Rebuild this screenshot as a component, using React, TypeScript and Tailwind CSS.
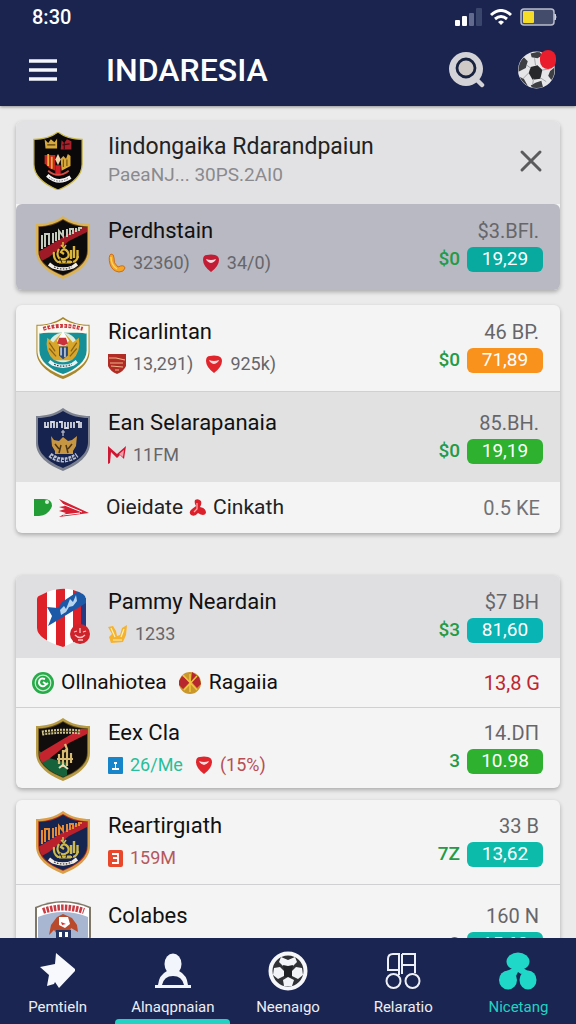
import React from "react";

type IconProps = { className?: string };

const SHIELD = "M28 0 C36 6 46 8 55 8 V35 C55 48 43 57 28 63 C13 57 1 48 1 35 V8 C10 8 20 6 28 0 Z";
const INNER = "M28 4 C36 9 44 11 52 11 V35 C52 46 41 54 28 59 C15 54 4 46 4 35 V11 C12 11 20 9 28 4 Z";

function Emblem({ fill }: { fill: string }) {
  return (
    <g fill="none" stroke={fill}>
      <path d="M24 33 Q21 38 24 42 Q29 45 33 41 Q35 37 31 34 Q28 32 26 36 L29 38" strokeWidth="2.2" />
      <path d="M26 29 L29 32 L31 29 M28 26 V30" strokeWidth="1.6" />
      <path d="M36 34 V43 M39 30 V42 M42.500 34 V42" strokeWidth="2.4" />
      <path d="M19 36 Q18 43 23 46 H38 Q42 45 43 40" strokeWidth="2.2" />
      <path d="M24 46 H36" strokeWidth="3" />
      <path d="M25 42 L27 47 M32 43 L31 47 M37 44 L38 47" stroke="#2a2112" strokeWidth="1" />
    </g>
  );
}

function Ribbon({ y = 50, color = "#f3eee8" }: { y?: number; color?: string }) {
  return (
    <g fill="none">
      <path d={`M14 ${y - 2} L18 ${y + 1} Q28 ${y + 5} 38 ${y + 1} L42 ${y - 2}`} stroke={color} strokeWidth="3.500" />
      <path d={`M19 ${y + 1} Q28 ${y + 5} 37 ${y + 1}`} stroke="#333" strokeWidth="1.2" strokeDasharray="1.6 1.4" />
    </g>
  );
}

function CrestRoyal() {
  return (
    <svg viewBox="0 0 56 63" className="h-[58px] w-[50px]" preserveAspectRatio="none" aria-hidden="true">
      <path d={SHIELD} fill="#0b0809" stroke="#c9b84a" strokeWidth="1.4" />
      <path d="M13 8 L17 12 L20 8 L24 11 L27 7 V18 H14 Z" fill="#d7a93a" />
      <path d="M16 14 H25" stroke="#5a3d0e" strokeWidth="1.5" />
      <path d="M32 9 L35 12 L38 8 L43 10 V19 H31 Z" fill="#a8222c" />
      <path d="M33 14 L41 13 M35 11 V19" stroke="#43080d" strokeWidth="1.3" />
      <path d="M13 25 H25 V42 L18 39 L13 34 Z" fill="#c6281f" />
      <path d="M17 24 V37 M21 27 V40" stroke="#efb03b" strokeWidth="2" />
      <path d="M31 29 L34 26 L37 29 L39 24 L42 26 V37 L32 42 Z" fill="#d7a93a" />
      <path d="M34 30 V38 M38 30 V37" stroke="#6d4b0c" strokeWidth="1.2" />
      <path d="M28 24 L31 30 L28 36 L25 30 Z" fill="#f3d7b0" />
      <path d="M25 36 H31 V47 H25 Z" fill="#d01f26" />
      <path d="M17 42 Q28 51 40 42" stroke="#d84a42" strokeWidth="2" fill="none" />
      <path d="M16 47 Q28 58 42 49" stroke="#f4f4f4" strokeWidth="4" fill="none" />
      <path d="M18 49 Q28 57 40 50" stroke="#555" strokeWidth="1" strokeDasharray="1.5 1.5" fill="none" />
    </svg>
  );
}

type CrestColors = { rim: string; edge: string; base: string; sash: string; marks: string; bird: string; corner?: string };

function CrestSash({ c, id }: { c: CrestColors; id: string }) {
  return (
    <svg viewBox="0 0 56 63" className="h-[63px] w-14" aria-hidden="true">
      <clipPath id={id}><path d={INNER} /></clipPath>
      <path d={SHIELD} fill={c.rim} />
      <path d={INNER} stroke={c.edge} strokeWidth="1.5" fill="none" />
      <g clipPath={`url(#${id})`}>
        <rect width="56" height="63" fill={c.base} />
        {c.corner && <path d="M0 30 L14 40 L32 45 V63 H0 Z" fill={c.corner} />}
        <path d="M0 38 L40 14 L56 6 V14 L34 25 L14 41 L3 47 Z" fill={c.sash} />
      </g>
      {c.corner ? (
        <g stroke={c.marks} fill="none">
          <path d="M7 15 Q28 12 46 14" strokeWidth="5" strokeDasharray="2 1" />
          <path d="M8 15 Q28 12 45 14" strokeWidth="1" stroke="#3e3515" />
          <path d="M30 26 L32 31 L29 34 M24 36 V46 M28 32 V49 M32 31 V48 M36 35 V45 M22 41 H38" strokeWidth="2.2" stroke={c.bird} />
          <path d="M24 50 L28 47 L33 51" strokeWidth="2" stroke="#e5dab9" />
        </g>
      ) : (
        <>
          <path d="M7 33 V19 M10 31 V18 H14 V29 M18 17 V27 M21 25 V16 M24 24 V15 L28 20 V14 M32 21 V13 M35 19 V13 H38 V18 M41 16 V12 M44 15 V12 H47" stroke={c.marks} strokeWidth="2" fill="none" />
          <Emblem fill={c.bird} />
          <Ribbon y={50} />
        </>
      )}
    </svg>
  );
}

function CrestTeal() {
  return (
    <svg viewBox="0 0 56 63" className="h-[62px] w-14" aria-hidden="true">
      <path d={SHIELD} fill="#a7882f" />
      <path d="M28 2 C36 7 45 9 54 9 V34 C54 46 43 54 28 60 C13 54 2 46 2 34 V9 C11 9 20 7 28 2 Z" fill="#fdf8e6" />
      <path d="M4 16 H52 V34 C52 45 41 53 28 58 C15 53 4 45 4 34 Z" fill="#168f97" />
      <path d="M4 17 V10 Q28 2 52 10 V17 Q28 11 4 17 Z" fill="#fdf8f2" />
      <path d="M8 12 Q28 6 48 12" stroke="#c9383c" strokeWidth="4" strokeDasharray="3 1.3" fill="none" />
      <path d="M9 12 Q28 6 47 12" stroke="#fff" strokeWidth="1" strokeDasharray="2 3" fill="none" />
      <circle cx="28" cy="31" r="15" fill="#d9ecdf" />
      <path d="M12 21 L18 26 L22 21 L28 15 L34 21 L38 26 L44 21 Q47 35 37 44 H19 Q9 35 12 21 Z" fill="#d9a62c" />
      <path d="M14 26 L20 35 M14 32 L21 40 M42 26 L36 35 M42 32 L35 40" stroke="#8a6518" strokeWidth="1.3" />
      <path d="M28 14 L34 24 L31 29 H24 L22 24 Z" fill="#fff" />
      <path d="M24 21 H31 L33 27 L29 29 L22 27 Z" fill="#c9323a" />
      <path d="M24 30 H33 V39 L28 43 L24 39 Z" fill="#2b4a7c" />
      <path d="M26 31 V39 M30 31 V41" stroke="#fff" strokeWidth="1.2" />
      <Ribbon y={47} color="#e5f1f3" />
    </svg>
  );
}

function CrestNavy() {
  return (
    <svg viewBox="0 0 56 63" className="h-[63px] w-14" aria-hidden="true">
      <path d={SHIELD} fill="#7c8290" />
      <path d="M28 3 C36 8 45 10 53 10 V34 C53 46 42 54 28 60 C14 54 3 46 3 34 V10 C11 10 20 8 28 3 Z" fill="#17234f" />
      <path d="M10 14 V19 H13 V14 M16 20 V14 H19 V20 M22 14 V20 M24 14 H27 V20 M30 14 V20 H33 V14 M36 14 V20 M39 14 V20 M41 14 H44 V20 M46 14 V20" stroke="#d5d8df" strokeWidth="1.8" fill="none" />
      <path d="M28 22 V28 M26 24 H30" stroke="#c4c8d4" strokeWidth="1.2" />
      <path d="M16 28 L19 32 L24 33 L28 29 L33 33 L37 32 L42 28 L41 38 L38 43 V46 H20 V43 L17 38 Z" fill="#c79643" />
      <path d="M20 36 L24 41 M37 36 L33 41 M26 37 L24 45 M31 37 L33 45" stroke="#4c3414" strokeWidth="1.5" />
      <path d="M15 47 Q28 57 42 47" stroke="#b9bfcb" strokeWidth="5" strokeDasharray="3 1" fill="none" />
      <path d="M16 48 Q28 57 41 48" stroke="#17234f" strokeWidth="1.2" strokeDasharray="2 2" fill="none" />
    </svg>
  );
}

function CrestStripes() {
  return (
    <svg viewBox="0 0 56 60" className="h-[60px] w-14" aria-hidden="true">
      <clipPath id="stripes"><path d="M2 11 Q2 8 6 7 Q28 -5 48 6 Q51 8 51 11 V38 Q51 50 28 59 Q2 51 2 40 Z" /></clipPath>
      <g clipPath="url(#stripes)">
        <rect width="56" height="60" fill="#fff" />
        <path d="M0 0 H12 V60 H0 Z M21 0 H30 V60 H21 Z M38 0 H46 V60 H38 Z" fill="#de2029" />
        <path d="M46 10 H56 V60 H46 Z" fill="#243b83" />
        <path d="M27 14 L45 2 L56 5 V12 L28 29 L13 38 L17 28 L12 19 L23 20 Z" fill="#1c5aa8" />
        <path d="M25 22 L29 18 L31 21 L35 11 L38 14 L41 7 L42 13 L38 18 L34 19 L31 24 L26 27 Z" fill="#b8d5ee" />
      </g>
      <circle cx="45" cy="46" r="10" fill="#cf232c" />
      <path d="M39 44 L42 43 M45 40 V45 M48 44 L51 43 M40 47 Q45 52 50 47 M43 52 H48" stroke="#f7c5c2" strokeWidth="1.3" fill="none" />
    </svg>
  );
}

function CrestEagle() {
  return (
    <svg viewBox="0 0 56 63" className="h-[63px] w-14" aria-hidden="true">
      <path d="M0 6 Q28 -6 56 6 V36 Q52 52 28 62 Q4 52 0 36 Z" fill="#7e7767" />
      <path d="M2 7 Q28 -4 54 7 V36 Q50 51 28 60 Q6 51 2 36 Z" fill="#fff" />
      <path d="M3 16 Q28 6 53 16 V36 Q49 50 28 59 Q7 50 3 36 Z" fill="#a9b6d1" />
      <path d="M8 10 Q28 3 49 10" stroke="#cb3b42" strokeWidth="6" strokeDasharray="2.5 1.2" fill="none" />
      <path d="M14 34 L16 24 L22 16 L28 13 L37 17 L42 24 L43 31 L36 27 L34 33 H22 L19 29 Z" fill="#b94a2b" />
      <path d="M24 16 H33 L35 23 L30 27 L24 24 Z" fill="#fff" />
      <path d="M26 21 L31 23 L27 24 Z" fill="#d92f2f" />
      <path d="M21 29 H36 V45 H21 Z" fill="#263461" />
      <path d="M24 31 H27 V36 H24 Z M30 31 H33 V36 H30 Z" fill="#fff" />
    </svg>
  );
}

function Ball({ className }: IconProps) {
  return (
    <svg viewBox="0 0 40 40" className={className} aria-hidden="true">
      <clipPath id="ballClip"><circle cx="20" cy="20" r="18.5" /></clipPath>
      <circle cx="20" cy="20" r="19" fill="#e6e6e8" />
      <g clipPath="url(#ballClip)">
        <path d="M14 17 L21 15 L26 20 L24 29 L16 30 L12 23 Z" fill="#262829" />
        <path d="M14 3 L23 1 L26 5 L21 8 L15 7 Z M0 14 L7 7 L11 11 L9 18 L1 22 Z M0 26 L7 29 L12 38 L4 36 Z M19 33 L25 31 L27 39 L17 40 L14 36 Z M34 21 L40 16 V29 L35 30 L32 26 Z" fill="#3d3f42" />
        <path d="M18 8 L19 15 M10 15 L14 18 M12 23 L6 29 M17 29 L16 35 M24 28 L30 32 M26 20 L33 19" stroke="#a3a5a8" strokeWidth="1" />
      </g>
    </svg>
  );
}

function NavBall() {
  return (
    <svg viewBox="0 0 40 40" className="size-10" aria-hidden="true">
      <clipPath id="navBallClip"><circle cx="20" cy="20" r="15.5" /></clipPath>
      <circle cx="20" cy="20" r="17.5" fill="#303236" stroke="#f6f7fb" strokeWidth="4" />
      <g clipPath="url(#navBallClip)" fill="#f3f4f7">
        <path d="M13 6 L20 9 L27 6 L29 11 L25 15 H15 L11 11 Z" />
        <path d="M6 17 L12 16 L16 20 V25 L10 28 L5 24 Z" />
        <path d="M34 17 L28 16 L24 20 V25 L30 28 L35 24 Z" />
        <path d="M15 29 L20 26 L26 29 L24 35 H16 Z" />
      </g>
      <path d="M15 14 L20 15 L25 14 L24 19 V26 H16 V19 Z" fill="#202226" />
    </svg>
  );
}

const PhoneIcon = () => (
  <svg viewBox="0 0 18 20" className="h-5 w-[18px]" aria-hidden="true">
    <path d="M3 1 Q6 1 6 5 Q5 10 10 14 Q16 11 17 15 Q16 19 11 19 Q4 18 2 11 Q0 3 3 1 Z" fill="#f6a623" stroke="#c96d22" strokeWidth="1" />
    <path d="M3 4 Q3 12 9 16" stroke="#ffd565" strokeWidth="1.4" fill="none" />
  </svg>
);

const HeartIcon = ({ color = "#e0262c" }: { color?: string }) => (
  <svg viewBox="0 0 18 18" className="size-[18px]" aria-hidden="true">
    <path d="M9 18 Q1 12 1 6 Q1 1 5 1 Q9 0 13 1 Q17 2 17 6 Q17 12 9 18 Z" fill={color} />
    <path d="M4 5 Q9 7 14 5 Q13 8 9 9 Q5 8 4 5 Z" fill="#fbd9dc" />
  </svg>
);

const BadgeIcon = () => (
  <svg viewBox="0 0 18 20" className="h-5 w-[18px]" aria-hidden="true">
    <path d="M0 0 H18 V12 Q16 17 9 20 Q2 17 0 12 Z" fill="#b02c24" />
    <path d="M1 4 H8 L17 6 M2 9 L15 9 M3 12 L15 13 M7 16 H11" stroke="#f0b48a" strokeWidth="1.2" fill="none" />
  </svg>
);

const MIcon = () => (
  <svg viewBox="0 0 18 18" className="size-[18px]" aria-hidden="true">
    <path d="M0 18 V0 L9 8 L18 0 L16 13 L12 9 L9 12 L3 6 L2 17 Z" fill="#cf1633" />
    <path d="M11 8 L16 4 L15 11 Z" fill="#f2a0a8" />
  </svg>
);

const CrownIcon = () => (
  <svg viewBox="0 0 20 18" className="h-[18px] w-5" aria-hidden="true">
    <path d="M0 2 L5 1 L8 6 L9 11 L12 10 L14 3 L19 0 L18 10 L15 17 L3 18 L1 12 L4 9 Z" fill="#f5b22f" />
    <path d="M3 3 L7 12 M16 4 L13 12 M5 15 H14" stroke="#fff0b8" strokeWidth="1.2" />
  </svg>
);

const BlueIcon = () => (
  <svg viewBox="0 0 15 17" className="h-[17px] w-[15px]" aria-hidden="true">
    <rect width="15" height="17" rx="1" fill="#1685c9" />
    <path d="M4 11 H11 V13 H4 Z M7 5 H8 V11 H7 Z M6 5 H9 V7 H6 Z" fill="#fff" />
  </svg>
);

const RedBoxIcon = () => (
  <svg viewBox="0 0 15 17" className="h-[17px] w-[15px]" aria-hidden="true">
    <rect width="15" height="17" rx="2" fill="#e8472b" />
    <path d="M4 4 H10 V13 H4 M5 8 H10" stroke="#fff" strokeWidth="1.8" fill="none" />
  </svg>
);

const Close = () => (
  <svg viewBox="0 0 24 24" className="size-6" aria-hidden="true">
    <path d="M3 3 L21 21 M21 3 L3 21" stroke="#5b5b5d" strokeWidth="3" strokeLinecap="round" />
  </svg>
);

type Meta = { icon: React.ReactNode; text: string; tone?: string };

function TeamRow(props: {
  crest: React.ReactNode;
  name: string;
  meta: Meta[];
  value: string;
  change: string;
  pill: string;
  pillTone: string;
  className?: string;
}) {
  return (
    <li className={`flex items-center pr-[17px] pl-[18px] ${props.className ?? ""}`}>
      <div className="flex w-[58px] shrink-0 justify-center">{props.crest}</div>
      <div className="ml-4 min-w-0 flex-1">
        <h3 className="truncate text-[22px] leading-8 text-[#111]">{props.name}</h3>
        <div className="flex h-8 items-center gap-3">
          {props.meta.map((m) => (
            <span key={m.text} className={`flex items-center gap-[7px] text-lg ${m.tone ?? "text-[#66666a]"}`}>
              {m.icon}
              {m.text}
            </span>
          ))}
        </div>
      </div>
      <div className="flex h-16 flex-col items-end">
        <span className="pr-1 text-xl leading-8 text-[#66666a]">{props.value}</span>
        <span className="flex h-6 items-center gap-[7px]">
          <span className="text-[19px] font-medium text-[#239b46]">{props.change}</span>
          <span className={`flex h-[25px] w-[76px] items-center justify-center rounded-md text-[19px] text-white ${props.pillTone}`}>
            {props.pill}
          </span>
        </span>
      </div>
    </li>
  );
}

const card = "overflow-hidden rounded-md bg-[#f4f4f4] shadow-[0_2px_4px_rgba(0,0,0,0.28)]";

function NavItem({ icon, label, active, tone }: { icon: React.ReactNode; label: string; active?: boolean; tone?: string }) {
  return (
    <a href="#" className={`relative flex flex-1 flex-col items-center pt-[13px] ${tone ?? "text-[#eceef6]"}`} aria-current={active ? "page" : undefined}>
      <span className="flex h-10 items-center">{icon}</span>
      <span className="mt-1 text-[15px] leading-6">{label}</span>
      {active && <span className="absolute inset-x-0 bottom-0 h-[5px] rounded-t-sm bg-[#20d3c2]" />}
    </a>
  );
}

export default function App() {
  return (
    <div className="flex h-screen flex-col bg-[#ebebec] font-[Roboto,sans-serif]">
      <header className="shrink-0 bg-[#1a244e] text-white shadow-[0_1px_3px_rgba(0,0,0,0.4)]">
        <div className="flex h-[34px] items-center justify-between pr-[19px] pl-8">
          <span className="text-xl font-medium">8:30</span>
          <div className="flex items-center gap-2">
            <svg viewBox="0 0 27 18" className="h-[18px] w-[27px]" aria-hidden="true">
              <rect x="0" y="12" width="5" height="6" rx="1" fill="#fff" />
              <rect x="7" y="8" width="5" height="10" rx="1" fill="#fff" />
              <rect x="14" y="5" width="5" height="13" rx="1" fill="#626b8d" />
              <rect x="21" y="0" width="6" height="18" rx="1" fill="#3b466d" />
            </svg>
            <svg viewBox="0 0 22 17" className="h-[17px] w-[22px]" fill="none" stroke="#fff" strokeWidth="3" aria-hidden="true">
              <path d="M1 6 Q11 -3 21 6" />
              <path d="M5 10 Q11 5 17 10" />
              <path d="M8 13 Q11 10 14 13 L11 16 Z" fill="#fff" stroke="none" />
            </svg>
            <svg viewBox="0 0 37 18" className="h-[18px] w-[37px]" aria-hidden="true">
              <rect x="1" y="1" width="33" height="16" rx="3" fill="#444c6b" stroke="#b9bdcb" strokeWidth="1.5" />
              <rect x="3" y="3" width="11" height="12" rx="1" fill="#f5dd27" />
              <path d="M35 6 Q37 9 35 12 Z" fill="#d4d7e2" stroke="#d4d7e2" />
            </svg>
          </div>
        </div>
        <div className="flex h-[72px] items-center pr-5 pl-[29px]">
          <button type="button" aria-label="Menu">
            <svg viewBox="0 0 28 24" className="h-6 w-7" aria-hidden="true">
              <path d="M0 3 H28 M0 12 H28 M0 21 H28" stroke="#f4f7fc" strokeWidth="3.4" />
            </svg>
          </button>
          <h1 className="ml-[49px] flex-1 text-[32px] leading-9 font-medium">INDARESIA</h1>
          <button type="button" aria-label="Search" className="mr-8">
            <svg viewBox="0 0 36 36" className="size-9" aria-hidden="true">
              <circle cx="17" cy="17" r="17" fill="#d3d2d7" />
              <path d="M25 25 L33 33" stroke="#d3d2d7" strokeWidth="4.5" strokeLinecap="round" />
              <circle cx="17" cy="16" r="9" fill="#cfc9c8" stroke="#17223f" strokeWidth="2.8" />
            </svg>
          </button>
          <button type="button" aria-label="Live match" className="relative">
            <Ball className="h-10 w-[39px]" />
            <span className="absolute top-0 right-0 h-[19px] w-4 rounded-full bg-[#e91d2b]" />
          </button>
        </div>
      </header>

      <main className="min-h-0 flex-1 overflow-hidden px-4 pt-[15px]">
        <section className={card}>
          <div className="flex h-[83px] items-center bg-[#e2e2e4] px-[17px] pb-1">
            <CrestRoyal />
            <div className="ml-[25px] min-w-0 flex-1">
              <h2 className="truncate text-[23px] leading-7 text-[#222]">Iindongaika Rdarandpaiun</h2>
              <p className="truncate text-[19px] leading-7 text-[#8a8a8e]">PaeaNJ... 30PS.2AI0</p>
            </div>
            <button type="button" aria-label="Close"><Close /></button>
          </div>
          <ul>
            <TeamRow
              className="rounded-t-md bg-[#b8b9c2] py-[11px]"
              crest={<CrestSash id="c1" c={{ rim: "#dcb456", edge: "#6d4a1c", base: "#0e0b0c", sash: "#9d1a26", marks: "#c3cbbd", bird: "#dcb437" }} />}
              name="Perdhstain"
              meta={[{ icon: <PhoneIcon />, text: "32360)" }, { icon: <HeartIcon color="#c31c35" />, text: "34/0)" }]}
              value="$3.BFl."
              change="$0"
              pill="19,29"
              pillTone="bg-[#08aaa0]"
            />
          </ul>
        </section>

        <section className={`${card} mt-[15px]`}>
          <ul>
            <TeamRow
              className="py-[11px]"
              crest={<CrestTeal />}
              name="Ricarlintan"
              meta={[{ icon: <BadgeIcon />, text: "13,291)" }, { icon: <HeartIcon />, text: "925k)" }]}
              value="46 BP."
              change="$0"
              pill="71,89"
              pillTone="bg-[#f9911d]"
            />
            <TeamRow
              className="border-t border-[#d0d0d2] bg-[#e1e1e2] pt-[15px] pb-[11px]"
              crest={<CrestNavy />}
              name="Ean Selarapanaia"
              meta={[{ icon: <MIcon />, text: "11FM" }]}
              value="85.BH."
              change="$0"
              pill="19,19"
              pillTone="bg-[#2db12e]"
            />
            <li className="flex h-[51px] items-center pr-5 pl-[18px] text-[21px] text-[#222]">
              <svg viewBox="0 0 56 20" className="h-5 w-14" aria-hidden="true">
                <path d="M0 1 H10 Q18 1 18 8 Q15 17 5 18 H0 Z" fill="#229d35" />
                <circle cx="13" cy="4" r="2" fill="#d3efd6" />
                <path d="M25 1 L55 15 L25 19 L32 15 L25 13 L31 11 L25 9 L31 8 Z" fill="#d51f32" />
                <path d="M28 6 L48 14 M29 17 L46 15" stroke="#fff" strokeWidth="1" />
              </svg>
              <span className="ml-4">Oieidate</span>
              <svg viewBox="0 0 18 18" className="mx-[6px] size-[18px]" aria-hidden="true">
                <path d="M6 1 Q9 -1 12 2 Q13 5 11 8 Q17 9 17 14 Q15 18 9 14 Q6 18 2 16 Q-1 13 3 10 L7 7 Q5 4 6 1 Z" fill="#dc202b" />
                <path d="M8 4 V10 L5 13" stroke="#ffb0ae" strokeWidth="1.2" fill="none" />
              </svg>
              <span>Cinkath</span>
              <span className="ml-auto text-xl text-[#727276]">0.5 KE</span>
            </li>
          </ul>
        </section>

        <section className={`${card} mt-[42px]`}>
          <ul>
            <TeamRow
              className="bg-[#dfdfe1] pt-[11px] pb-2"
              crest={<CrestStripes />}
              name="Pammy Neardain"
              meta={[{ icon: <CrownIcon />, text: "1233" }]}
              value="$7 BH"
              change="$3"
              pill="81,60"
              pillTone="bg-[#08b4b4]"
            />
            <li className="flex h-[49px] items-center pr-5 pl-4 text-[21px] text-[#111]">
              <svg viewBox="0 0 22 22" className="size-[22px]" aria-hidden="true">
                <circle cx="11" cy="11" r="11" fill="#26ab48" />
                <circle cx="11" cy="11" r="7.8" fill="none" stroke="#c6efcf" strokeWidth="1.2" />
                <path d="M13 7 Q7 5 7 11 Q8 15 12 14 L16 11 M11 10 L14 12" stroke="#fff" strokeWidth="2" fill="none" />
              </svg>
              <span className="ml-[7px]">Ollnahiotea</span>
              <svg viewBox="0 0 22 22" className="mr-2 ml-3 size-[22px]" aria-hidden="true">
                <circle cx="11" cy="11" r="11" fill="#c9972c" />
                <path d="M0 9 L3 4 L11 10 L4 17 L0 13 Z M12 9 L13 0 L20 5 L22 12 L18 16 Z" fill="#b8262e" />
                <path d="M4 3 L18 18 M18 4 L5 18 M11 2 V20" stroke="#f0c63e" strokeWidth="1.5" />
              </svg>
              <span>Ragaiia</span>
              <span className="ml-auto text-xl text-[#bd2630]">13,8 G</span>
            </li>
            <TeamRow
              className="border-t border-[#d0d0d2] pt-[9px] pb-[7px]"
              crest={<CrestSash id="c2" c={{ rim: "#b89b45", edge: "#5d4a1c", base: "#100d0c", sash: "#c4242d", marks: "#cfc48e", bird: "#d8bb72", corner: "#17623a" }} />}
              name="Eex Cla"
              meta={[
                { icon: <BlueIcon />, text: "26/Me", tone: "text-[#27bf9b]" },
                { icon: <HeartIcon />, text: "(15%)", tone: "text-[#b84d55]" },
              ]}
              value="14.DΠ"
              change="3"
              pill="10.98"
              pillTone="bg-[#2db12e]"
            />
          </ul>
        </section>

        <section className={`${card} mt-3`}>
          <ul>
            <TeamRow
              className="py-[10px]"
              crest={<CrestSash id="c3" c={{ rim: "#d9a04a", edge: "#b02a20", base: "#15254f", sash: "#b9202b", marks: "#e58a33", bird: "#cdb951" }} />}
              name="Reartirgıath"
              meta={[{ icon: <RedBoxIcon />, text: "159M", tone: "text-[#b5585c]" }]}
              value="33 B"
              change="7Z"
              pill="13,62"
              pillTone="bg-[#0dbbab]"
            />
            <TeamRow
              className="border-t border-[#d0d0d2] pt-[15px] pb-[11px]"
              crest={<CrestEagle />}
              name="Colabes"
              meta={[{ icon: <HeartIcon color="#20b99c" />, text: "15.60", tone: "text-[#27bf9b]" }]}
              value="160 N"
              change="3"
              pill="15,68"
              pillTone="bg-[#0dbbab]"
            />
          </ul>
        </section>
      </main>

      <nav className="relative flex h-[86px] shrink-0 bg-[#1b2551]" aria-label="Main">
        <NavItem
          label="Pemtieln"
          icon={
            <svg viewBox="0 0 36 36" className="size-9" aria-hidden="true">
              <path d="M16 0 L35 16 V18 L19 35 L15 29 L14 31 L7 33 L9 22 L0 14 L15 11 Z" fill="#f8f9fc" />
            </svg>
          }
        />
        <NavItem
          active
          label="Alnaqpnaian"
          icon={
            <svg viewBox="0 0 36 36" className="size-9" aria-hidden="true">
              <ellipse cx="18" cy="11" rx="8.5" ry="10.5" fill="#f2f5fb" />
              <path d="M12 18 H24 Q32 22 33 32 H3 Q4 22 12 18 Z" fill="#f2f5fb" />
              <path d="M7 32 Q9 23 18 23 Q27 23 29 32 Z" fill="#1b2551" />
              <path d="M0 33.5 H36" stroke="#f2f5fb" strokeWidth="3" />
            </svg>
          }
        />
        <NavItem label="Neenaıgo" icon={<NavBall />} />
        <NavItem
          label="Relaratio"
          icon={
            <svg viewBox="0 0 36 36" className="size-9" fill="none" stroke="#eef0f8" strokeWidth="2" aria-hidden="true">
              <path d="M3 17 V6 Q3 1 8 1 H14 V17 Z M17 1 H30 V20 M17 1 V21 M17 12 H30 M14 17 V22" />
              <circle cx="8.5" cy="28" r="7" />
              <circle cx="27.5" cy="28" r="7" />
            </svg>
          }
        />
        <NavItem
          label="Nicetang"
          tone="text-[#20d3c2]"
          icon={
            <svg viewBox="0 0 38 38" className="size-[38px]" fill="#20d8c7" aria-hidden="true">
              <ellipse cx="19" cy="9.5" rx="11.5" ry="9" />
              <ellipse cx="9" cy="28" rx="9" ry="9.5" />
              <ellipse cx="29" cy="28" rx="8.5" ry="9.5" />
              <path d="M8 19 L14 16 H24 L29 19 L22 22 L19 20 L17 24 Z" />
            </svg>
          }
        />
      </nav>
    </div>
  );
}
